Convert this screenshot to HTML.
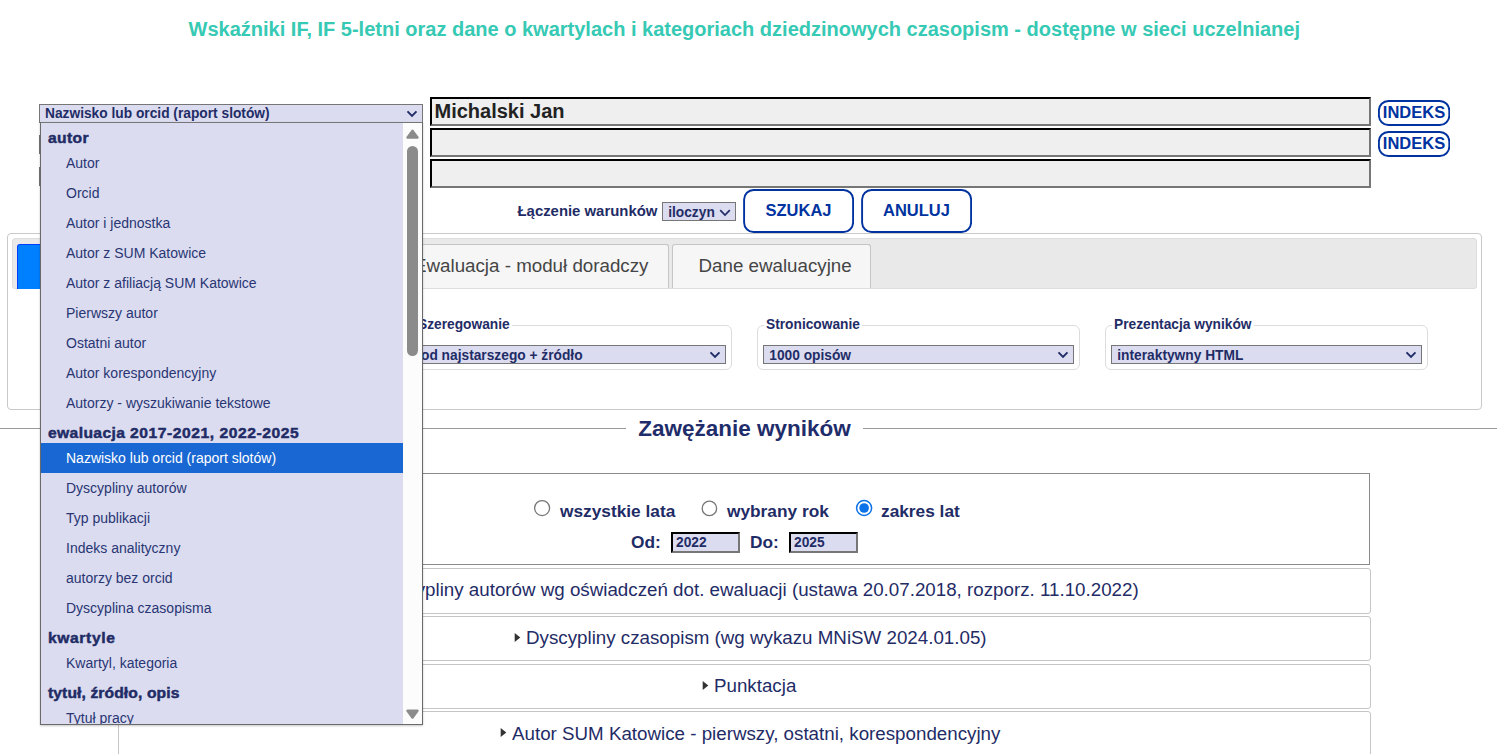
<!DOCTYPE html>
<html lang="pl">
<head>
<meta charset="utf-8">
<title>Wskaźniki IF</title>
<style>
*{box-sizing:border-box;}
html,body{margin:0;padding:0;}
body{width:1497px;height:754px;overflow:hidden;background:#fff;position:relative;font-family:"Liberation Sans",sans-serif;color:#1f2c66;}
.abs{position:absolute;}
#title{left:0;width:1488.6px;top:17px;text-align:center;font-weight:bold;font-size:20px;line-height:24px;color:#36c9b4;white-space:nowrap;}
.sel{background:#dcdcf0;border:1px solid #767676;font-weight:bold;font-size:13.75px;line-height:17px;padding-top:1px;color:#1f2c66;white-space:nowrap;overflow:hidden;}
.sel svg{position:absolute;}
.inp{left:430px;width:941px;height:29px;background:#efefef;border:2px solid;border-color:#000 #767676 #767676 #000;font-weight:bold;font-size:20px;line-height:24px;color:#222;padding:0 0 0 2.5px;white-space:nowrap;}
.idx{left:1378px;width:72px;height:26px;color:#0033a0;font-weight:bold;font-size:16.5px;line-height:24px;text-align:center;white-space:nowrap;}
.btn{height:44px;width:111px;color:#0033a0;font-weight:bold;font-size:16.5px;line-height:43px;text-align:center;}
#panel{left:7px;top:233px;width:1475px;height:177px;border:1px solid #c9c9c9;border-radius:4px;background:#fff;}
#nav{left:12px;top:238px;width:1465px;height:51px;background:#e9e9e9;border:1px solid #ddd;border-radius:3px;}
.tab{top:244px;height:44px;border:1px solid #c5c5c5;border-bottom:none;border-radius:3px 3px 0 0;background:#f6f6f6;color:#454545;font-size:18.75px;line-height:42px;white-space:nowrap;}
.fs{top:325px;height:45px;border:1px solid #ddd;border-radius:6px;}
.leg{top:317px;font-weight:bold;font-size:13.75px;line-height:16px;background:#fff;white-space:nowrap;}
.dbox{left:118px;width:1253px;height:46px;border:1px solid #c5c5c5;border-radius:3px;background:#fff;font-size:18.75px;line-height:41px;color:#1f2c66;white-space:nowrap;}
.dbox span{position:absolute;top:0;}
.tri{position:absolute;width:7px;height:11px;}
.radio{width:16.500px;height:16.500px;border:1px solid #767676;border-radius:50%;background:#fff;}
.rl{font-weight:bold;font-size:17.3px;line-height:22px;white-space:nowrap;}
.yr{top:532px;width:69px;height:21px;background:#dcdcf0;border:2px solid;border-color:#000 #767676 #767676 #000;font-weight:bold;font-size:13.75px;line-height:17px;padding-left:3px;}
#dd{left:40px;top:122px;width:383px;height:603px;background:#dcdcf0;border:1px solid #6a6a6a;border-top-color:#767676;box-shadow:0 1px 2px rgba(0,0,0,.22);overflow:hidden;}
.og{position:absolute;left:7px;font-weight:bold;font-size:14px;line-height:18px;color:#1f2c66;white-space:nowrap;-webkit-text-stroke:0.45px #1f2c66;letter-spacing:0.35px;transform-origin:0 50%;transform:scaleX(1.116);}
.op{position:absolute;left:25px;font-size:14px;line-height:18px;color:#283673;white-space:nowrap;}
</style>
</head>
<body>
<div id="title" class="abs">Wskaźniki IF, IF 5-letni oraz dane o kwartylach i kategoriach dziedzinowych czasopism - dostępne w sieci uczelnianej</div>

<!-- hidden selects' left edges -->
<div class="abs" style="left:39px;top:135px;width:3px;height:19px;background:#767676;"></div>
<div class="abs" style="left:39px;top:167px;width:3px;height:19px;background:#767676;"></div>

<!-- inputs -->
<div class="abs inp" style="top:97px;">Michalski Jan</div>
<div class="abs inp" style="top:128px;"></div>
<div class="abs inp" style="top:159px;"></div>
<div class="abs idx" style="top:100px;"><svg class="abs" style="left:0;top:0;" width="72" height="26"><rect x="0.9" y="1" width="70.400" height="24" rx="9.500" ry="9.500" fill="#fff" stroke="#0033a0" stroke-width="1.9"/></svg><span style="position:relative;">INDEKS</span></div>
<div class="abs idx" style="top:131px;"><svg class="abs" style="left:0;top:0;" width="72" height="26"><rect x="0.9" y="1" width="70.400" height="24" rx="9.500" ry="9.500" fill="#fff" stroke="#0033a0" stroke-width="1.9"/></svg><span style="position:relative;">INDEKS</span></div>

<!-- laczenie -->
<div class="abs" style="left:517.500px;top:202px;font-weight:bold;font-size:14.900px;line-height:18px;white-space:nowrap;">Łączenie warunków</div>
<div class="abs sel" style="left:662px;top:202px;width:74px;height:19px;padding-left:5.200px;">iloczyn
<svg width="12" height="8" style="right:4.500px;top:5.500px;" viewBox="0 0 12 8"><path d="M1.2 1.2 L6 6 L10.8 1.2" fill="none" stroke="#1f2c66" stroke-width="1.7"/></svg></div>
<div class="abs btn" style="left:743px;top:189px;"><svg class="abs" style="left:0;top:0;" width="111" height="44"><rect x="1.1" y="1" width="109" height="42" rx="9.500" ry="9.500" fill="#fff" stroke="#0033a0" stroke-width="1.9"/></svg><span style="position:relative;">SZUKAJ</span></div>
<div class="abs btn" style="left:861px;top:189px;"><svg class="abs" style="left:0;top:0;" width="111" height="44"><rect x="1.1" y="1" width="109" height="42" rx="9.500" ry="9.500" fill="#fff" stroke="#0033a0" stroke-width="1.9"/></svg><span style="position:relative;">ANULUJ</span></div>

<!-- tabs panel -->
<div id="panel" class="abs"></div>
<div id="nav" class="abs"></div>
<div class="abs tab" style="left:17px;width:180px;height:45px;background:#007fff;border-color:#003eff;"></div>
<div class="abs tab" style="left:300px;width:369px;padding-left:113px;">Ewaluacja - moduł doradczy</div>
<div class="abs tab" style="left:672px;width:199px;padding-left:25.500px;">Dane ewaluacyjne</div>

<div class="abs fs" style="left:300px;width:432px;"></div>
<div class="abs leg" style="left:415.500px;padding:0 2.500px;">Szeregowanie</div>
<div class="abs sel" style="left:300px;top:345px;width:426px;height:19px;padding-left:120px;">od najstarszego + źródło
<svg width="14" height="9" style="right:3.500px;top:5px;" viewBox="0 0 14 9"><path d="M2.500 1.4 L7 5.900 L11.500 1.4" fill="none" stroke="#1f2c66" stroke-width="1.900"/></svg></div>

<div class="abs fs" style="left:757px;width:323px;"></div>
<div class="abs leg" style="left:763.500px;padding:0 2.500px;">Stronicowanie</div>
<div class="abs sel" style="left:763px;top:345px;width:311px;height:19px;padding-left:5.300px;">1000 opisów
<svg width="14" height="9" style="right:3.500px;top:5px;" viewBox="0 0 14 9"><path d="M2.500 1.4 L7 5.900 L11.500 1.4" fill="none" stroke="#1f2c66" stroke-width="1.900"/></svg></div>

<div class="abs fs" style="left:1105px;width:323px;"></div>
<div class="abs leg" style="left:1111.500px;padding:0 2.500px;">Prezentacja wyników</div>
<div class="abs sel" style="left:1111px;top:345px;width:311px;height:19px;padding-left:5.300px;">interaktywny HTML
<svg width="14" height="9" style="right:3.500px;top:5px;" viewBox="0 0 14 9"><path d="M2.500 1.4 L7 5.900 L11.500 1.4" fill="none" stroke="#1f2c66" stroke-width="1.900"/></svg></div>

<!-- zawezanie -->
<div class="abs" style="left:0;top:428px;width:1497px;height:1px;background:#999;"></div>
<div class="abs" style="left:626px;top:412px;width:237px;height:32px;background:#fff;text-align:center;font-weight:bold;font-size:22.5px;line-height:33.500px;color:#1f2d6b;white-space:nowrap;">Zawężanie wyników</div>

<div class="abs" style="left:118px;top:473px;width:1252px;height:92px;border:1px solid #8a8a8a;background:#fff;"></div>
<svg class="abs" style="left:532px;top:498px;" width="20" height="20"><circle cx="10.1" cy="10.1" r="7.500" fill="#fff" stroke="#767676" stroke-width="1.3"/></svg>
<div class="abs rl" style="left:560px;top:500px;">wszystkie lata</div>
<svg class="abs" style="left:699px;top:498px;" width="20" height="20"><circle cx="10.4" cy="10.4" r="7.2" fill="#fff" stroke="#767676" stroke-width="1.3"/></svg>
<div class="abs rl" style="left:727px;top:500px;">wybrany rok</div>
<svg class="abs" style="left:854px;top:498px;" width="20" height="20"><circle cx="10.1" cy="10" r="7.500" fill="#fff" stroke="#0b72e8" stroke-width="1.500"/><circle cx="10.1" cy="10" r="4.800" fill="#0b72e8"/></svg>
<div class="abs rl" style="left:881px;top:500px;">zakres lat</div>
<div class="abs rl" style="left:631px;top:531px;">Od:</div>
<div class="abs yr" style="left:671px;">2022</div>
<div class="abs rl" style="left:750px;top:531px;">Do:</div>
<div class="abs yr" style="left:789px;">2025</div>

<div class="abs dbox" style="top:568px;"><span style="left:255px;">Dyscypliny autorów wg oświadczeń dot. ewaluacji (ustawa 20.07.2018, rozporz. 11.10.2022)</span></div>
<div class="abs dbox" style="top:616px;height:45px;"><svg class="tri" style="left:395px;top:15px;" viewBox="0 0 7 11"><path d="M0.7 1 L6.3 5.500 L0.7 10 Z" fill="#333"/></svg><span style="left:407px;">Dyscypliny czasopism (wg wykazu MNiSW 2024.01.05)</span></div>
<div class="abs dbox" style="top:664px;height:45px;"><svg class="tri" style="left:583px;top:15px;" viewBox="0 0 7 11"><path d="M0.7 1 L6.3 5.500 L0.7 10 Z" fill="#333"/></svg><span style="left:595px;">Punktacja</span></div>
<div class="abs dbox" style="top:711px;line-height:43px;"><svg class="tri" style="left:381px;top:15px;" viewBox="0 0 7 11"><path d="M0.7 1 L6.3 5.500 L0.7 10 Z" fill="#333"/></svg><span style="left:393px;">Autor SUM Katowice - pierwszy, ostatni, korespondencyjny</span></div>

<!-- main select -->
<div class="abs sel" style="left:39px;top:104px;width:384px;height:19px;padding-left:5px;padding-top:0;">Nazwisko lub orcid (raport slotów)
<svg width="14" height="9" style="right:3.500px;top:4.500px;" viewBox="0 0 14 9"><path d="M2.500 1.4 L7 5.900 L11.500 1.4" fill="none" stroke="#1f2c66" stroke-width="1.900"/></svg></div>

<!-- dropdown -->
<div id="dd" class="abs">
<div class="abs" style="left:362px;top:0;width:20px;height:601px;background:#fcfcfc;"></div>
<div class="abs" style="left:366px;top:23px;width:11px;height:210px;border-radius:5.5px;background:#8b8b8b;"></div>
<svg class="abs" style="left:364px;top:5px;" width="15" height="12" viewBox="0 0 15 12"><path d="M7.500 2.900 L12.400 9.500 L2.600 9.500 Z" fill="#8b8b8b" stroke="#8b8b8b" stroke-width="2.600" stroke-linejoin="round"/></svg>
<svg class="abs" style="left:364px;top:585px;" width="15" height="12" viewBox="0 0 15 12"><path d="M7.500 9.400 L12.400 2.800 L2.600 2.800 Z" fill="#8b8b8b" stroke="#8b8b8b" stroke-width="2.600" stroke-linejoin="round"/></svg>
<div class="og" style="top:6px;">autor</div>
<div class="op" style="top:31px;">Autor</div>
<div class="op" style="top:61px;">Orcid</div>
<div class="op" style="top:91px;">Autor i jednostka</div>
<div class="op" style="top:121px;">Autor z SUM Katowice</div>
<div class="op" style="top:151px;">Autor z afiliacją SUM Katowice</div>
<div class="op" style="top:181px;">Pierwszy autor</div>
<div class="op" style="top:211px;">Ostatni autor</div>
<div class="op" style="top:241px;">Autor korespondencyjny</div>
<div class="op" style="top:271px;">Autorzy - wyszukiwanie tekstowe</div>
<div class="og" style="top:301px;">ewaluacja <span style="letter-spacing:0.5px">2017-2021, 2022-2025</span></div>
<div class="abs" style="left:0;top:320px;width:362px;height:30px;background:#1967d2;"></div>
<div class="op" style="top:326px;color:#fff;">Nazwisko lub orcid (raport slotów)</div>
<div class="op" style="top:356px;">Dyscypliny autorów</div>
<div class="op" style="top:386px;">Typ publikacji</div>
<div class="op" style="top:416px;">Indeks analityczny</div>
<div class="op" style="top:446px;">autorzy bez orcid</div>
<div class="op" style="top:476px;">Dyscyplina czasopisma</div>
<div class="og" style="top:506px;letter-spacing:0.55px;">kwartyle</div>
<div class="op" style="top:531px;">Kwartyl, kategoria</div>
<div class="og" style="top:561px;letter-spacing:0.1px;">tytuł, źródło, opis</div>
<div class="op" style="top:586px;">Tytuł pracy</div>
</div>
</body>
</html>
